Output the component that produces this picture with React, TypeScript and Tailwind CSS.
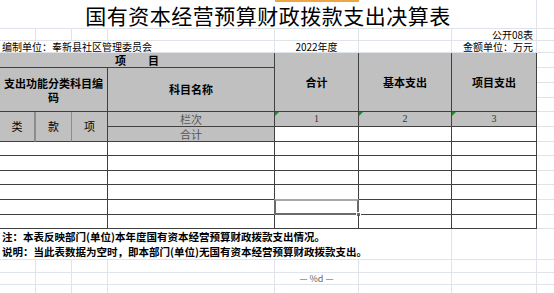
import React from 'react'

const faint = 'border-[#dfe3ea]'
const dark = 'border-[#404040]'
const cols = [36, 36, 36, 167, 84, 93, 85, 17]

function FaintRow({ h, children }: { h: string; children?: React.ReactNode[] }) {
  return (
    <div className={`flex ${h}`}>
      {cols.map((w, i) => (
        <div
          key={i}
          className={`shrink-0 border-b ${faint} ${i < 7 ? 'border-r' : ''} flex items-center`}
          style={{ width: w }}
        >
          {children ? children[i] : null}
        </div>
      ))}
    </div>
  )
}

function Triangle() {
  return (
    <span className="absolute left-0 top-0 w-0 h-0 border-t-[4px] border-r-[4px] border-t-[#1f8a2a] border-r-transparent" />
  )
}

export default function App() {
  const dataRows = ['h-[14px]', 'h-[15px]', 'h-[14px]', 'h-[15px]', 'h-[15px]', 'h-[14px]']

  return (
    <div className="relative w-[554px] h-[293px] overflow-hidden bg-white text-black font-['Noto_Sans_CJK_SC',sans-serif]">
      <div className="absolute left-[275px] top-0 w-[84px] h-[2px] bg-[#f0a543]" />

      {/* title */}
      <div className="flex h-[29px]">
        <div className={`w-[537px] shrink-0 border-r border-b ${faint} flex items-center justify-center text-[21px] tracking-[0.5px] leading-none pt-[3px]`}>
          国有资本经营预算财政拨款支出决算表
        </div>
        <div className={`w-[17px] shrink-0 border-b ${faint}`} />
      </div>

      <FaintRow h="h-[12px]">
        {[
          null, null, null, null, null, null,
          <span key="a" className="w-full text-right pr-[3px] text-[10px] leading-none whitespace-nowrap">公开08表</span>,
          null,
        ]}
      </FaintRow>

      {/* unit row */}
      <div className="flex h-[12px] text-[10px] leading-none">
        <div className={`w-[275px] shrink-0 border-r border-b ${faint} flex items-center pl-[2px] whitespace-nowrap`}>
          编制单位：奉新县社区管理委员会
        </div>
        <div className={`w-[84px] shrink-0 border-r border-b ${faint} flex items-center justify-center whitespace-nowrap`}>
          2022年度
        </div>
        <div className={`w-[93px] shrink-0 border-r border-b ${faint}`} />
        <div className={`w-[85px] shrink-0 border-r border-b ${faint} flex items-center justify-end pr-[3px] whitespace-nowrap`}>
          金额单位：万元
        </div>
        <div className={`w-[17px] shrink-0 border-b ${faint}`} />
      </div>

      {/* header block */}
      <div className="flex h-[89px] text-[11px] leading-none">
        <div className="w-[275px] shrink-0 flex flex-col">
          <div className={`h-[15px] bg-[#c0c0c0] border-r border-b ${dark} flex items-center justify-center font-bold`}>
            项　　目
          </div>
          <div className="flex h-[44px]">
            <div className={`w-[108px] bg-[#c0c0c0] border-r border-b ${dark} flex items-center justify-center text-center font-bold leading-[14px]`}>
              支出功能分类科目编<br />码
            </div>
            <div className={`w-[167px] bg-[#c0c0c0] border-r border-b ${dark} flex items-center justify-center font-bold`}>
              科目名称
            </div>
          </div>
          <div className="flex h-[30px]">
            <div className={`w-[36px] bg-[#c0c0c0] border-r-2 border-r-[#8c8c8c] border-b ${dark} flex items-center justify-center`}>类</div>
            <div className={`w-[36px] bg-[#c0c0c0] border-r border-r-[#8c8c8c] border-b ${dark} flex items-center justify-center`}>款</div>
            <div className={`w-[36px] bg-[#c0c0c0] border-r border-b ${dark} flex items-center justify-center`}>项</div>
            <div className="w-[167px] flex flex-col">
              <div className={`h-[15px] bg-[#c0c0c0] border-r border-b ${dark} flex items-center justify-center text-[#555]`}>栏次</div>
              <div className={`h-[15px] bg-[#c0c0c0] border-r border-b ${dark} flex items-center justify-center text-[#555]`}>合计</div>
            </div>
          </div>
        </div>

        {[
          { w: 'w-[84px]', t: '合计', n: '1' },
          { w: 'w-[93px]', t: '基本支出', n: '2' },
          { w: 'w-[85px]', t: '项目支出', n: '3' },
        ].map(c => (
          <div key={c.n} className={`${c.w} shrink-0 flex flex-col`}>
            <div className={`h-[59px] bg-[#c0c0c0] border-r border-b ${dark} flex items-center justify-center font-bold`}>
              {c.t}
            </div>
            <div className={`relative h-[15px] bg-[#c0c0c0] border-r border-b ${dark} flex items-center justify-center text-[10px] text-[#333] font-['Liberation_Serif',serif]`}>
              <Triangle />
              {c.n}
            </div>
            <div className={`h-[15px] border-r border-b ${dark}`} />
          </div>
        ))}

        <div className="w-[17px] shrink-0 flex flex-col">
          {['h-[15px]', 'h-[15px]', 'h-[15px]', 'h-[14px]', 'h-[15px]', 'h-[15px]'].map((h, i) => (
            <div key={i} className={`${h} border-b ${faint}`} />
          ))}
        </div>
      </div>

      {/* data rows */}
      {dataRows.map((h, r) => (
        <div key={r} className={`flex ${h}`}>
          <div className={`w-[108px] shrink-0 border-r border-b ${dark}`} />
          <div className={`w-[167px] shrink-0 border-r border-b ${dark}`} />
          <div className={`relative w-[84px] shrink-0 border-r border-b ${dark}`}>
            {r === 4 && (
              <div className="absolute left-[-1px] top-[-1px] w-[85px] h-[16px] border-2 border-[#6a6a6a] border-t-[#a8a8a8]">
                <span className="absolute right-[-4px] bottom-[-4px] w-[5px] h-[5px] bg-[#6a6a6a] border border-white" />
              </div>
            )}
          </div>
          <div className={`w-[93px] shrink-0 border-r border-b ${dark}`} />
          <div className={`w-[85px] shrink-0 border-r border-b ${dark}`} />
          <div className={`w-[17px] shrink-0 border-b ${faint}`} />
        </div>
      ))}

      {/* notes */}
      <div className="flex h-[17px] text-[10.5px] font-bold leading-none">
        <div className={`w-[452px] shrink-0 border-r ${faint} flex items-center pl-[2px] whitespace-nowrap`}>
          注：本表反映部门(单位)本年度国有资本经营预算财政拨款支出情况。
        </div>
        <div className={`w-[85px] shrink-0 border-r ${faint}`} />
        <div className="w-[17px] shrink-0" />
      </div>
      <div className="flex h-[14px] text-[10.5px] font-bold leading-none">
        <div className={`w-[452px] shrink-0 border-r border-b ${faint} flex items-center pl-[2px] whitespace-nowrap`}>
          说明：当此表数据为空时，即本部门(单位)无国有资本经营预算财政拨款支出。
        </div>
        <div className={`w-[85px] shrink-0 border-r border-b ${faint}`} />
        <div className={`w-[17px] shrink-0 border-b ${faint}`} />
      </div>

      <FaintRow h="h-[13px]" />
      <FaintRow h="h-[12px]">
        {[
          null, null, null, null,
          <span key="p" className="w-full text-center text-[9px] leading-none text-[#666] whitespace-nowrap">—  %d  —</span>,
          null, null, null,
        ]}
      </FaintRow>
      <FaintRow h="h-[13px]" />
    </div>
  )
}
